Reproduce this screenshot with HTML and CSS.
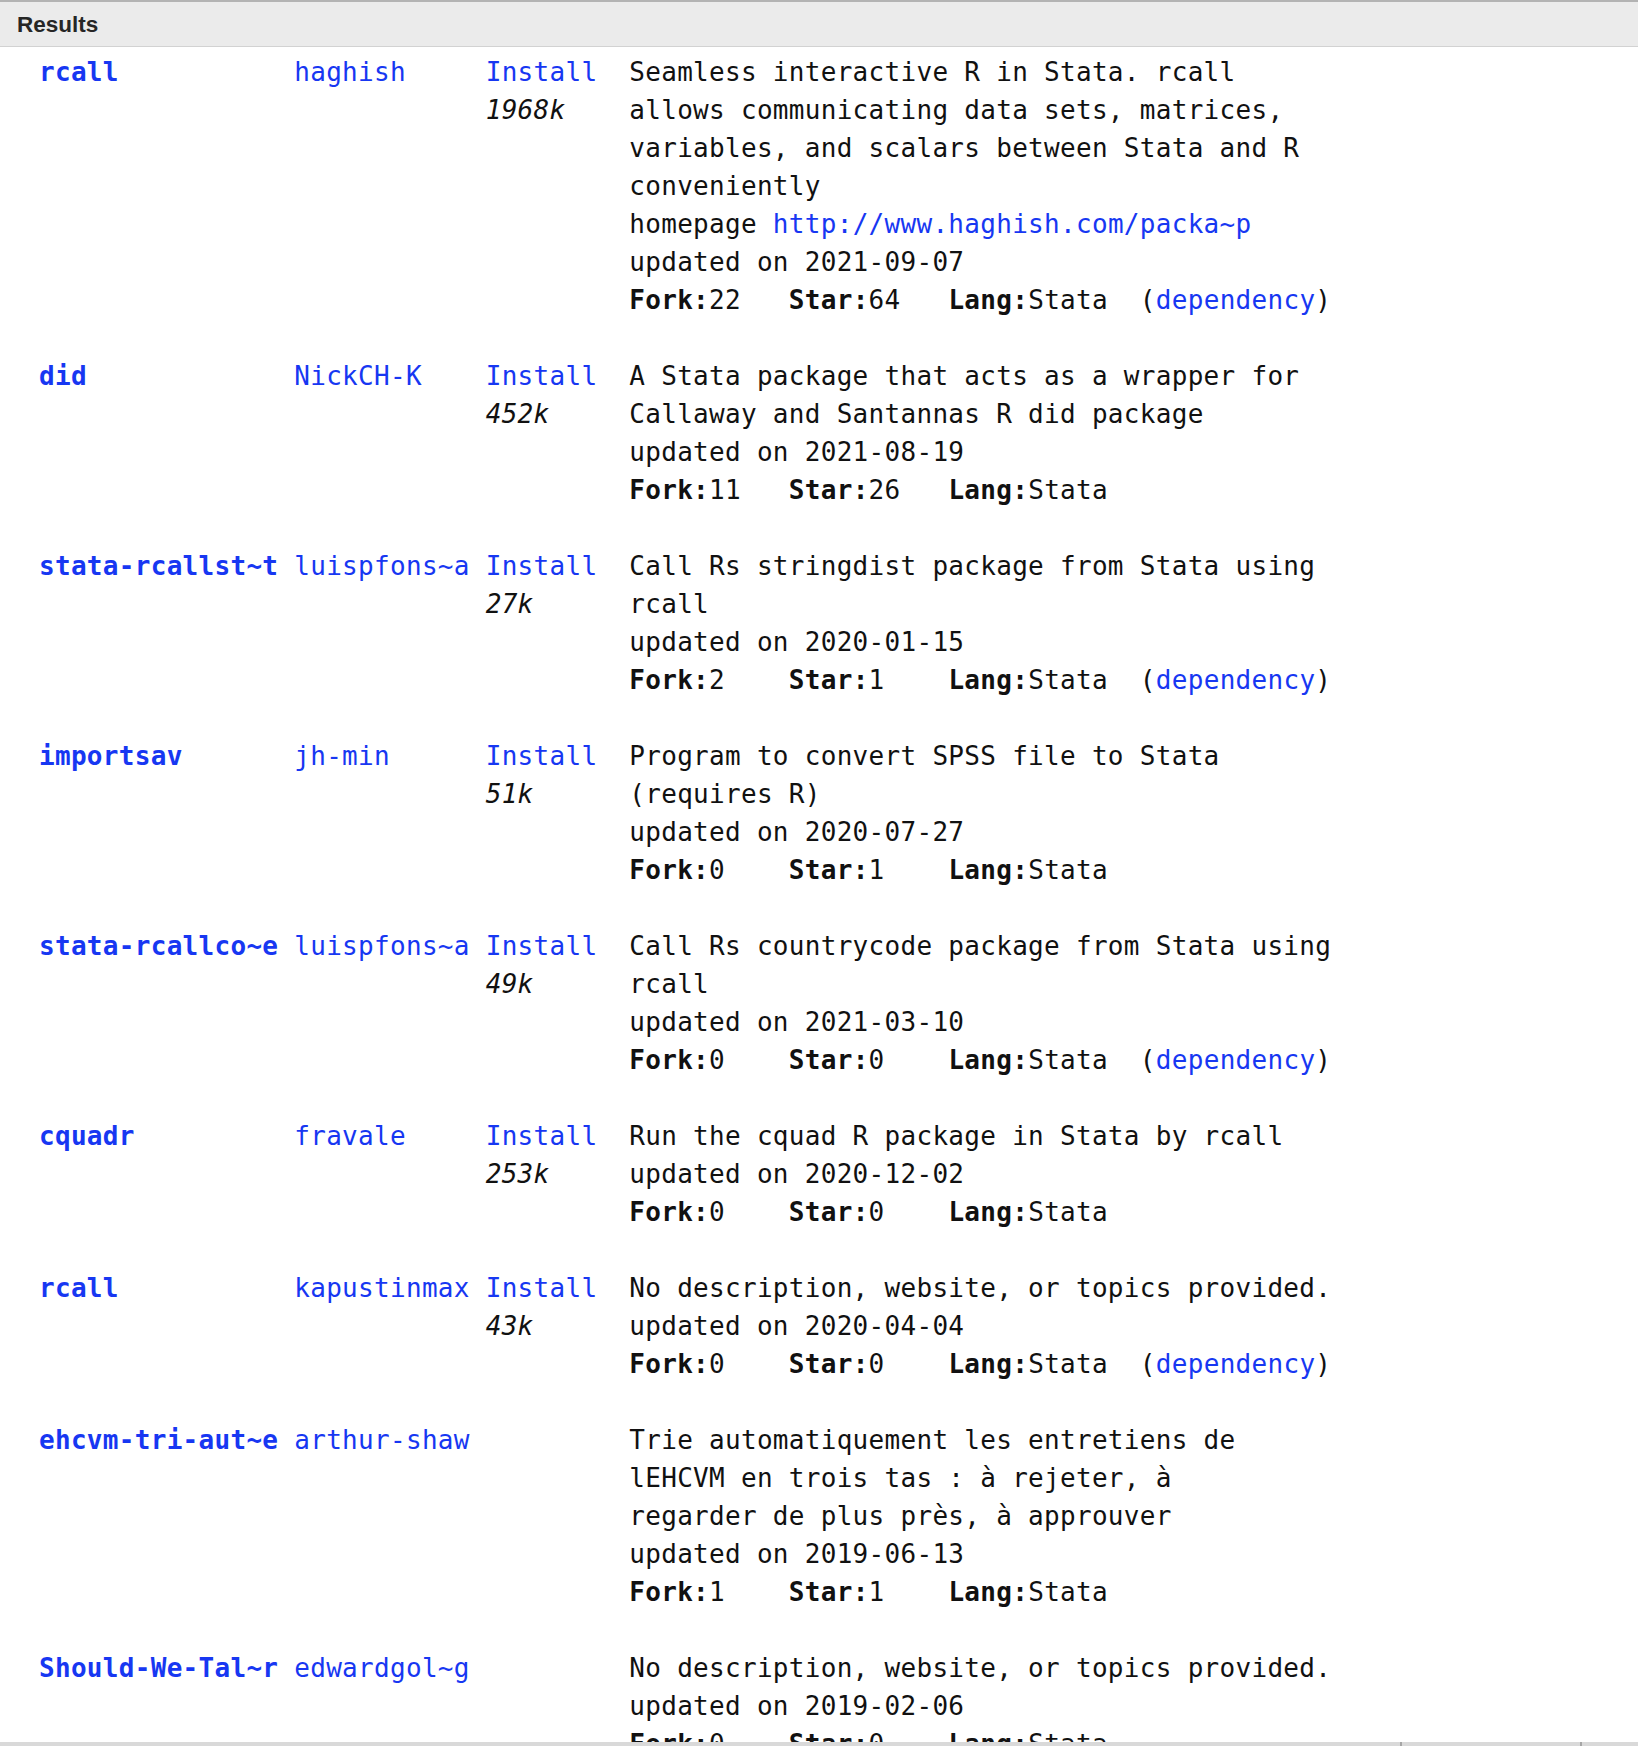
FILE: index.html
```html
<!DOCTYPE html>
<html>
<head>
<meta charset="utf-8">
<link rel="stylesheet" href="styles.css">
</head>
<body>
<div class="panel">
  <div class="titlebar">Results</div>
  <div class="results">
    <div class="row">
      <div class="c-name">rcall</div>
      <div class="c-author">haghish</div>
      <div class="c-inst"><span class="link">Install</span><span class="size">1968k</span></div>
      <div class="c-desc">
        <div class="ln">Seamless interactive R in Stata. rcall</div>
        <div class="ln">allows communicating data sets, matrices,</div>
        <div class="ln">variables, and scalars between Stata and R</div>
        <div class="ln">conveniently</div>
        <div class="ln">homepage <span class="link">http://www.haghish.com/packa~p</span></div>
        <div class="ln">updated on 2021-09-07</div>
        <div class="ln"><b>Fork:</b>22   <b>Star:</b>64   <b>Lang:</b>Stata  (<span class="link">dependency</span>)</div>
      </div>
    </div>
    <div class="row">
      <div class="c-name">did</div>
      <div class="c-author">NickCH-K</div>
      <div class="c-inst"><span class="link">Install</span><span class="size">452k</span></div>
      <div class="c-desc">
        <div class="ln">A Stata package that acts as a wrapper for</div>
        <div class="ln">Callaway and Santannas R did package</div>
        <div class="ln">updated on 2021-08-19</div>
        <div class="ln"><b>Fork:</b>11   <b>Star:</b>26   <b>Lang:</b>Stata</div>
      </div>
    </div>
    <div class="row">
      <div class="c-name">stata-rcallst~t</div>
      <div class="c-author">luispfons~a</div>
      <div class="c-inst"><span class="link">Install</span><span class="size">27k</span></div>
      <div class="c-desc">
        <div class="ln">Call Rs stringdist package from Stata using</div>
        <div class="ln">rcall</div>
        <div class="ln">updated on 2020-01-15</div>
        <div class="ln"><b>Fork:</b>2    <b>Star:</b>1    <b>Lang:</b>Stata  (<span class="link">dependency</span>)</div>
      </div>
    </div>
    <div class="row">
      <div class="c-name">importsav</div>
      <div class="c-author">jh-min</div>
      <div class="c-inst"><span class="link">Install</span><span class="size">51k</span></div>
      <div class="c-desc">
        <div class="ln">Program to convert SPSS file to Stata</div>
        <div class="ln">(requires R)</div>
        <div class="ln">updated on 2020-07-27</div>
        <div class="ln"><b>Fork:</b>0    <b>Star:</b>1    <b>Lang:</b>Stata</div>
      </div>
    </div>
    <div class="row">
      <div class="c-name">stata-rcallco~e</div>
      <div class="c-author">luispfons~a</div>
      <div class="c-inst"><span class="link">Install</span><span class="size">49k</span></div>
      <div class="c-desc">
        <div class="ln">Call Rs countrycode package from Stata using</div>
        <div class="ln">rcall</div>
        <div class="ln">updated on 2021-03-10</div>
        <div class="ln"><b>Fork:</b>0    <b>Star:</b>0    <b>Lang:</b>Stata  (<span class="link">dependency</span>)</div>
      </div>
    </div>
    <div class="row">
      <div class="c-name">cquadr</div>
      <div class="c-author">fravale</div>
      <div class="c-inst"><span class="link">Install</span><span class="size">253k</span></div>
      <div class="c-desc">
        <div class="ln">Run the cquad R package in Stata by rcall</div>
        <div class="ln">updated on 2020-12-02</div>
        <div class="ln"><b>Fork:</b>0    <b>Star:</b>0    <b>Lang:</b>Stata</div>
      </div>
    </div>
    <div class="row">
      <div class="c-name">rcall</div>
      <div class="c-author">kapustinmax</div>
      <div class="c-inst"><span class="link">Install</span><span class="size">43k</span></div>
      <div class="c-desc">
        <div class="ln">No description, website, or topics provided.</div>
        <div class="ln">updated on 2020-04-04</div>
        <div class="ln"><b>Fork:</b>0    <b>Star:</b>0    <b>Lang:</b>Stata  (<span class="link">dependency</span>)</div>
      </div>
    </div>
    <div class="row">
      <div class="c-name">ehcvm-tri-aut~e</div>
      <div class="c-author">arthur-shaw</div>
      <div class="c-inst"></div>
      <div class="c-desc">
        <div class="ln">Trie automatiquement les entretiens de</div>
        <div class="ln">lEHCVM en trois tas : à rejeter, à</div>
        <div class="ln">regarder de plus près, à approuver</div>
        <div class="ln">updated on 2019-06-13</div>
        <div class="ln"><b>Fork:</b>1    <b>Star:</b>1    <b>Lang:</b>Stata</div>
      </div>
    </div>
    <div class="row">
      <div class="c-name">Should-We-Tal~r</div>
      <div class="c-author">edwardgol~g</div>
      <div class="c-inst"></div>
      <div class="c-desc">
        <div class="ln">No description, website, or topics provided.</div>
        <div class="ln">updated on 2019-02-06</div>
        <div class="ln"><b>Fork:</b>0    <b>Star:</b>0    <b>Lang:</b>Stata</div>
      </div>
    </div>
  </div>
  <div class="bottombar">
    <div class="seg seg-a"></div>
    <div class="seg seg-b"></div>
    <div class="seg seg-c"></div>
  </div>
</div>
</body>
</html>
```

FILE: styles.css
```css
html, body {
  margin: 0;
  padding: 0;
  background: #ffffff;
}

.panel {
  width: 1638px;
  height: 1746px;
  display: flex;
  flex-direction: column;
  overflow: hidden;
}

.titlebar {
  flex: none;
  height: 47px;
  box-sizing: border-box;
  border-top: 2px solid #b3b3b3;
  border-bottom: 1px solid #d2d2d2;
  background: #ebebeb;
  display: flex;
  align-items: center;
  padding: 1px 0 0 17px;
  font-family: "Liberation Sans", Arial, sans-serif;
  font-weight: bold;
  font-size: 22.5px;
  color: #262626;
}

.results {
  --adv: 0.3px;
  flex: 1;
  min-height: 0;
  overflow: hidden;
  padding: 6px 0 0 39px;
  font-family: "DejaVu Sans Mono", monospace;
  font-size: 26px;
  letter-spacing: 0.3px;
  line-height: 38px;
  color: #111111;
}

.row {
  display: flex;
  margin-bottom: 38px;
}

.c-name {
  width: calc(16ch + 16 * var(--adv));
  flex: none;
  font-weight: bold;
  color: #1737f2;
  white-space: pre;
}

.c-author {
  width: calc(12ch + 12 * var(--adv));
  flex: none;
  color: #1737f2;
  white-space: pre;
}

.c-inst {
  width: calc(9ch + 9 * var(--adv));
  flex: none;
  display: flex;
  flex-direction: column;
}

.c-desc {
  display: flex;
  flex-direction: column;
}

.ln {
  white-space: pre;
}

.link {
  color: #1737f2;
}

.size {
  font-style: italic;
  color: #111111;
}

.ln b {
  font-weight: bold;
}

.bottombar {
  flex: none;
  height: 4px;
  background: #d9d9d9;
  display: flex;
}

.seg {
  height: 4px;
}

.seg-a {
  width: 1400px;
  border-right: 2px solid #a6a6a6;
}

.seg-b {
  width: 178px;
  border-right: 2px solid #a6a6a6;
}

.seg-c {
  flex: 1;
}
```
